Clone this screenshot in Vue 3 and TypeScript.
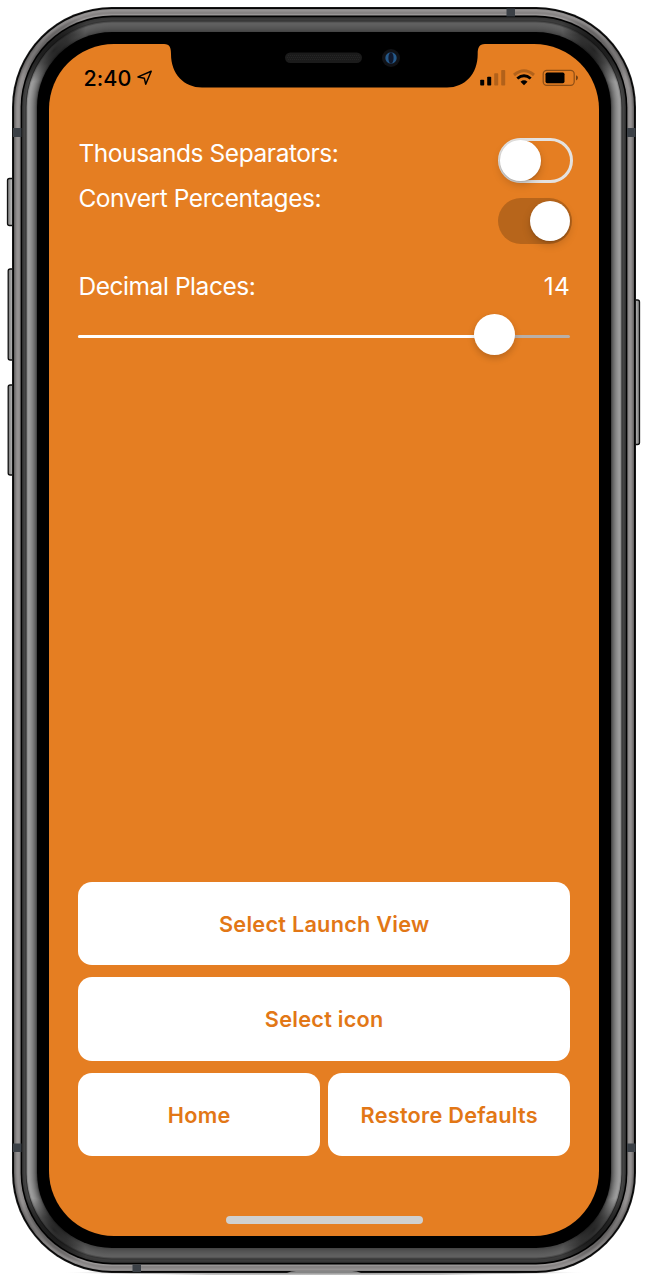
<script setup lang="ts">
import { computed, ref } from 'vue'

interface Layer {
  inset: number
  side: string
  edge: string
}

const shell: Layer[] = [
  { inset: 0, side: '#1c1c1c', edge: '#1c1c1c' },
  { inset: 0.8, side: '#050505', edge: '#050505' },
  { inset: 2, side: '#686666', edge: '#8a8888' },
  { inset: 3, side: '#7c7979', edge: '#969393' },
  { inset: 4, side: '#8c8989', edge: '#8f8c8c' },
  { inset: 5, side: '#949191', edge: '#878484' },
  { inset: 7, side: '#8c8989', edge: '#999696' },
  { inset: 8.6, side: '#000000', edge: '#000000' },
  { inset: 10.2, side: '#3c3c3c', edge: '#383838' },
  { inset: 12, side: '#444444', edge: '#3c3c3c' },
  { inset: 13.6, side: '#303030', edge: '#343434' },
  { inset: 14.6, side: '#888888', edge: '#4c4c4c' },
  { inset: 15.6, side: '#9c9c9c', edge: '#606060' },
  { inset: 17, side: '#999999', edge: '#5f5f5f' },
  { inset: 18, side: '#929292', edge: '#5d5d5d' },
  { inset: 19, side: '#8a8a8a', edge: '#5a5a5a' },
  { inset: 20, side: '#818181', edge: '#575757' },
  { inset: 21, side: '#767676', edge: '#545454' },
  { inset: 22, side: '#6a6a6a', edge: '#505050' },
  { inset: 23, side: '#5c5c5c', edge: '#4b4b4b' },
  { inset: 24, side: '#474747', edge: '#454545' },
  { inset: 25, side: '#000000', edge: '#000000' },
]

const bands = [
  { x: 506.5, y: 8.5, w: 8.5, h: 8 },
  { x: 13, y: 128, w: 8.5, h: 9 },
  { x: 627, y: 128, w: 8.5, h: 9 },
  { x: 13, y: 1143.5, w: 8.5, h: 8.5 },
  { x: 627, y: 1143.5, w: 8.5, h: 8.5 },
  { x: 132.5, y: 1264.5, w: 8.5, h: 7.5 },
]

const leftKeys = [
  { x: 7.5, y: 178.5, h: 47 },
  { x: 8.2, y: 269, h: 91 },
  { x: 8.2, y: 385, h: 90 },
]

const thousands = ref(false)
const percentages = ref(true)
const places = ref(14)
const ratio = computed(() => ((places.value / 16.54) * 100).toFixed(2) + '%')
</script>

<template>
  <main class="phone">
    <svg class="chassis" viewBox="0 0 648 1280" aria-hidden="true">
      <defs>
        <linearGradient v-for="(l, i) in shell" :id="'shell' + i" :key="i" gradientUnits="userSpaceOnUse" x1="0" y1="7" x2="0" y2="1273">
          <stop offset="0" :stop-color="l.edge" />
          <stop offset=".022" :stop-color="l.edge" />
          <stop offset=".034" :stop-color="l.side" />
          <stop offset=".966" :stop-color="l.side" />
          <stop offset=".978" :stop-color="l.edge" />
          <stop offset="1" :stop-color="l.edge" />
        </linearGradient>
        <linearGradient id="key" x1="0" x2="1">
          <stop offset="0" stop-color="#777" />
          <stop offset=".5" stop-color="#b4b4b4" />
          <stop offset="1" stop-color="#777" />
        </linearGradient>
        <radialGradient id="shade">
          <stop offset="0" stop-color="#000" stop-opacity=".75" />
          <stop offset=".4" stop-color="#000" stop-opacity=".55" />
          <stop offset="1" stop-color="#000" stop-opacity="0" />
        </radialGradient>
        <radialGradient id="floor">
          <stop offset="0" stop-color="#888" />
          <stop offset=".8" stop-color="#aaa" stop-opacity=".7" />
          <stop offset="1" stop-color="#fff" stop-opacity="0" />
        </radialGradient>
        <clipPath id="body"><rect x="12" y="7" width="624" height="1266" rx="100" /></clipPath>
      </defs>
      <ellipse cx="324" cy="1272.5" rx="262" ry="3" fill="url(#floor)" />
      <rect v-for="k in leftKeys" :key="k.y" :x="k.x" :y="k.y" width="8" :height="k.h" rx="2" fill="url(#key)" stroke="#111" stroke-width="1.3" />
      <rect x="632" y="300" width="7.5" height="144.500" rx="2" fill="url(#key)" stroke="#111" stroke-width="1.3" />
      <rect
        v-for="(l, i) in shell"
        :key="'r' + i"
        :x="12 + l.inset"
        :y="7 + l.inset"
        :width="624 - l.inset * 2"
        :height="1266 - l.inset * 2"
        :rx="100 - l.inset"
        :fill="'url(#shell' + i + ')'"
      />
      <g clip-path="url(#body)" fill="url(#shade)">
        <ellipse rx="42" ry="17" transform="translate(54 50) rotate(-45)" />
        <ellipse rx="42" ry="17" transform="translate(594 50) rotate(45)" />
        <ellipse rx="42" ry="17" transform="translate(54 1230) rotate(45)" />
        <ellipse rx="42" ry="17" transform="translate(594 1230) rotate(-45)" />
      </g>
      <rect v-for="b in bands" :key="b.x + '-' + b.y" :x="b.x" :y="b.y" :width="b.w" :height="b.h" fill="#3b4046" />
      <path d="M287 1273q4-2 9-2h56q5 0 9 2z" fill="#858585" />
    </svg>

    <section class="screen">
      <svg class="notch" width="322" height="46" viewBox="0 0 322 46" aria-hidden="true">
        <path d="M0 0H321V1C315 1 313.700 5 313.700 11C313.700 31 301 44.500 283 44.500H38C20 44.500 7 31 7 11C7 5 6 1 0 1Z" />
        <rect x="121" y="9.500" width="77" height="10.500" rx="5.250" fill="#1b1b1b" />
        <path d="M124 12.500H195M123 14.500H196M124 16.500H195" stroke="#292929" stroke-width=".7" stroke-dasharray="1 1" />
        <circle cx="227" cy="15" r="9" fill="#111216" />
        <circle cx="227" cy="15" r="5.700" fill="#255889" />
        <ellipse cx="227" cy="15" rx="2.600" ry="5.700" fill="#10182c" />
      </svg>

      <header class="status">
        <div class="clock">
          <span>2:40</span>
          <svg width="17" height="17" viewBox="0 0 17 17" aria-hidden="true">
            <path d="M15.200 2.200L2 7.900L8.300 9.200L9.700 15.200Z" fill="none" stroke="#000" stroke-width="1.500" stroke-linejoin="round" />
          </svg>
        </div>
        <svg width="101" height="20" viewBox="0 0 101 20" aria-hidden="true">
          <rect x="1.200" y="11.700" width="4" height="5.800" rx=".8" />
          <rect x="8.200" y="8.700" width="4" height="8.800" rx=".8" />
          <g fill="#000" opacity=".22">
            <rect x="15.200" y="5.200" width="4" height="12.300" rx=".8" />
            <rect x="22.200" y="2" width="4" height="15.500" rx=".8" />
          </g>
          <path d="M35 7Q45 -1.500 55 7" fill="none" stroke="#000" stroke-opacity=".22" stroke-width="3" />
          <path d="M38.300 10.500Q45 4.800 51.700 10.500" fill="none" stroke="#000" stroke-width="2.900" />
          <path d="M41.500 13.700Q45 10.800 48.500 13.700L45 17.300Z" />
          <rect x="64.200" y="2.300" width="31" height="15" rx="3.600" fill="none" stroke="#000" stroke-opacity=".38" stroke-width="1.200" />
          <rect x="66.500" y="4.500" width="19" height="10.700" rx="1.700" />
          <path d="M97 7.200Q99 8 99 9.800Q99 11.600 97 12.400Z" fill-opacity=".5" />
        </svg>
      </header>

      <div class="settings">
        <div class="labels">
          <span>Thousands Separators:</span>
          <span class="convert">Convert Percentages:</span>
        </div>
        <div class="switches">
          <button class="switch" :class="{ on: thousands }" role="switch" :aria-checked="thousands" aria-label="Thousands Separators" @click="thousands = !thousands"><i></i></button>
          <button class="switch" :class="{ on: percentages }" role="switch" :aria-checked="percentages" aria-label="Convert Percentages" @click="percentages = !percentages"><i></i></button>
        </div>
      </div>

      <div class="decimals">
        <span>Decimal Places:</span>
        <span class="count">{{ places }}</span>
      </div>
      <div class="slider">
        <div class="filled" :style="{ width: ratio }"></div>
        <div class="knob"></div>
      </div>

      <div class="actions">
        <button class="action wide">Select Launch View</button>
        <button class="action wide">Select icon</button>
        <button class="action">Home</button>
        <button class="action">Restore Defaults</button>
      </div>
      <div class="home-bar"></div>
    </section>
  </main>
</template>

<style>
body {
  background: #fff;
}
</style>

<style scoped>
.phone {
  position: relative;
  box-sizing: border-box;
  width: 648px;
  height: 1280px;
  padding: 43.5px 49px 44px;
  overflow: hidden;
  font-family: Inter, "Liberation Sans", sans-serif;
}
.chassis {
  position: absolute;
  inset: 0;
  width: 648px;
  height: 1280px;
}
.screen {
  position: relative;
  box-sizing: border-box;
  display: flex;
  flex-direction: column;
  width: 550px;
  height: 1192.5px;
  padding: 0 29px 0 29.4px;
  border-radius: 65px;
  background: #e57e22;
  color: #fff;
}
.notch {
  position: absolute;
  left: 115px;
  top: -0.5px;
}
.status {
  position: relative;
  display: flex;
  justify-content: space-between;
  height: 93px;
  padding: 24.5px 0 0 5px;
  margin-right: -10px;
  box-sizing: border-box;
  color: #000;
}
.clock {
  display: flex;
  gap: 4px;
  font-size: 21.5px;
  font-weight: 550;
  letter-spacing: 0.1px;
  line-height: 20px;
}
.clock svg {
  margin-top: 1px;
}
.settings {
  display: flex;
  justify-content: space-between;
  height: 133px;
}
.labels {
  display: flex;
  flex-direction: column;
}
.labels span,
.decimals {
  font-size: 24.5px;
  letter-spacing: -0.43px;
  line-height: 32px;
  white-space: nowrap;
}
.labels .convert {
  margin-top: 13px;
}
.count {
  letter-spacing: 0.2px;
}
.switches {
  display: flex;
  flex-direction: column;
  gap: 15px;
  margin: 1px -3px 0 0;
}
.switch {
  box-sizing: border-box;
  display: flex;
  align-items: center;
  width: 75px;
  height: 45.5px;
  padding: 0;
  border: 3px solid #e4e2e0;
  border-radius: 23px;
  background: transparent;
}
.switch i {
  width: 40.5px;
  height: 40.5px;
  flex: none;
  margin-left: -0.6px;
  border-radius: 50%;
  background: #fff;
  box-shadow: 0 4px 8px rgb(0 0 0 / 17%), 0 1px 2px rgb(0 0 0 / 15%);
}
.switch.on {
  width: 74px;
  justify-content: flex-end;
  padding-right: 2px;
  border: 0;
  background: #b7651b;
}
.decimals {
  display: flex;
  justify-content: space-between;
}
.slider {
  display: flex;
  align-items: center;
  width: 491.5px;
  height: 3px;
  margin-top: 33px;
  border-radius: 2px;
  background: #b9afa8;
}
.filled {
  height: 3px;
  border-radius: 2px;
  background: #fff;
}
.knob {
  width: 41px;
  height: 41px;
  flex: none;
  margin: -4px 0 0 -20px;
  border-radius: 50%;
  background: #fff;
  box-shadow: 0 3px 7px rgb(0 0 0 / 20%);
}
.actions {
  display: grid;
  grid-template-columns: 1fr 1fr;
  grid-auto-rows: 83.5px;
  gap: 12px 8.5px;
  margin-top: auto;
}
.action {
  padding: 0;
  border: 0;
  border-radius: 14px;
  background: #fff;
  color: #e27716;
  font: 600 21.7px/30px Inter, "Liberation Sans", sans-serif;
  letter-spacing: 0.25px;
  white-space: nowrap;
}
.wide {
  grid-column: 1 / -1;
}
.home-bar {
  width: 197px;
  height: 8px;
  margin: 59.5px auto 12.1px;
  border-radius: 4px;
  background: #d0d0d0;
}
</style>
